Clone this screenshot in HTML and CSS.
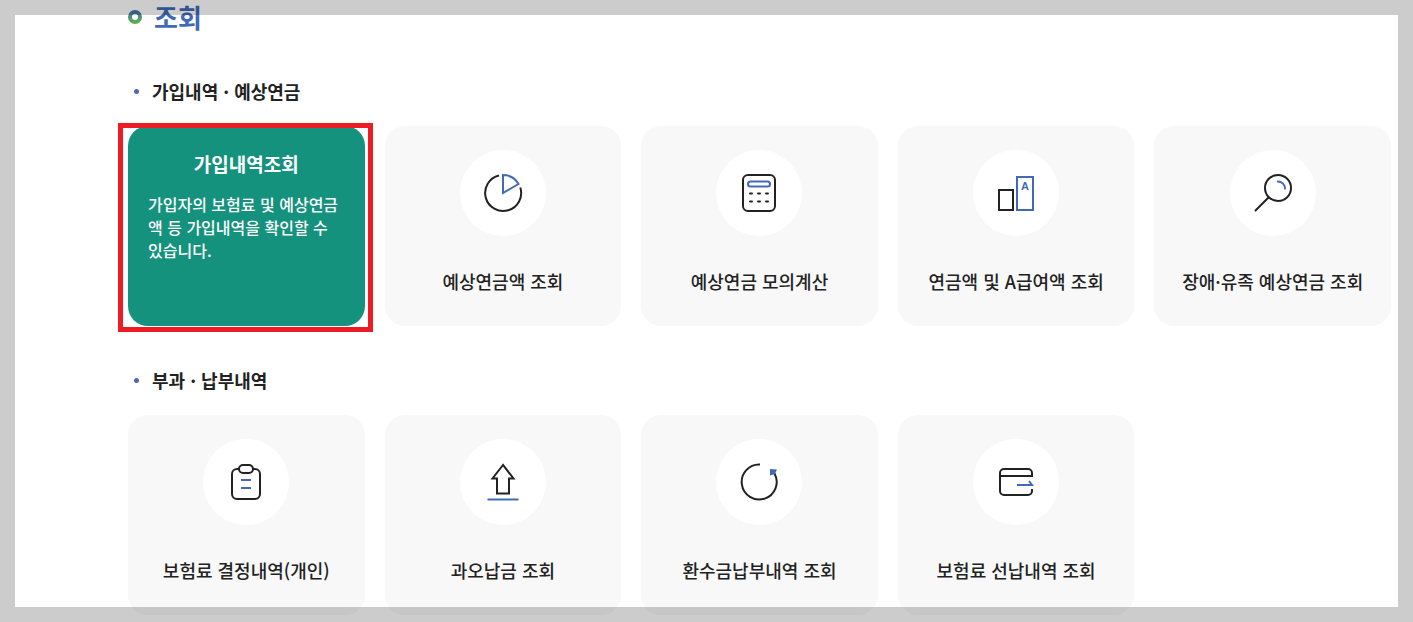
FILE: index.html
```html
<!DOCTYPE html>
<html lang="ko">
<head>
<meta charset="utf-8">
<meta name="viewport" content="width=device-width, initial-scale=1">
<title>조회</title>
<link rel="stylesheet" href="styles.css">
</head>
<body>
<main class="page">
  <h1 class="page-title">
    <svg class="ring" viewBox="0 0 14 14" aria-hidden="true">
      <defs><linearGradient id="ring-fill" x1="0" y1="0" x2="0" y2="14" gradientUnits="userSpaceOnUse"><stop offset="0" stop-color="#4269b6"/><stop offset="1" stop-color="#5bb947"/></linearGradient></defs>
      <circle cx="7" cy="7" r="5" fill="#fff" stroke="url(#ring-fill)" stroke-width="4"/>
    </svg>
    조회
  </h1>

  <section class="group">
    <h2 class="group-title">가입내역 · 예상연금</h2>
    <div class="cards">
      <a class="card card-active" href="#">
        <strong class="card-heading">가입내역조회</strong>
        <span class="card-text">가입자의 보험료 및 예상연금액 등 가입내역을 확인할 수 있습니다.</span>
      </a>
      <a class="card" href="#">
        <span class="icon"><svg viewBox="0 0 40 40" aria-hidden="true"><path d="M16 2.5A18 18 0 1 0 37.300 14.500"/><path class="blue" d="M20 2V20L35.500 11A18 18 0 0 0 20 2Z"/></svg></span>
        <span class="label">예상연금액 조회</span>
      </a>
      <a class="card" href="#">
        <span class="icon"><svg viewBox="0 0 40 40" aria-hidden="true"><rect x="4" y="2" width="32" height="36" rx="5"/><rect class="blue" x="9" y="8.500" width="22" height="5" rx="2.500"/><path stroke-linecap="round" d="M11 20.500h2M19 20.500h2M27 20.500h2M11 28.500h2M19 28.500h2M27 28.500h2"/></svg></span>
        <span class="label">예상연금 모의계산</span>
      </a>
      <a class="card" href="#">
        <span class="icon"><svg viewBox="0 0 40 40" aria-hidden="true"><rect x="3" y="17" width="14" height="20"/><rect class="blue" x="21" y="4" width="16" height="33"/><text class="icon-letter" x="29" y="17" text-anchor="middle">A</text></svg></span>
        <span class="label">연금액 및 A급여액 조회</span>
      </a>
      <a class="card" href="#">
        <span class="icon"><svg viewBox="0 0 40 40" aria-hidden="true"><circle cx="25" cy="15" r="13"/><path stroke-linecap="round" d="M15.500 24.500L2.500 37.500"/><path class="blue" d="M24 8.500C29 8 32.500 12 32 16.500"/></svg></span>
        <span class="label">장애·유족 예상연금 조회</span>
      </a>
    </div>
  </section>

  <section class="group">
    <h2 class="group-title">부과 · 납부내역</h2>
    <div class="cards">
      <a class="card" href="#">
        <span class="icon"><svg viewBox="0 0 40 40" aria-hidden="true"><path d="M13 7H11a5 5 0 0 0-5 5V32a5 5 0 0 0 5 5H29a5 5 0 0 0 5-5V12a5 5 0 0 0-5-5H27"/><rect x="13" y="3" width="14" height="8" rx="4"/><path class="blue" d="M15 18H25M15 26H25"/></svg></span>
        <span class="label">보험료 결정내역(개인)</span>
      </a>
      <a class="card" href="#">
        <span class="icon"><svg viewBox="0 0 40 40" aria-hidden="true"><path d="M20 3L9.500 16.500H14V31.500H26V16.500H30.500Z"/><path class="blue" d="M4.500 37.500H35.500"/></svg></span>
        <span class="label">과오납금 조회</span>
      </a>
      <a class="card" href="#">
        <span class="icon"><svg viewBox="0 0 40 40" aria-hidden="true"><path d="M21 2.500A17.500 17.500 0 1 0 35.500 11.500"/><path class="blue-fill" d="M31 7L38 7.500L36 12L31 13.500Z"/></svg></span>
        <span class="label">환수금납부내역 조회</span>
      </a>
      <a class="card" href="#">
        <span class="icon"><svg viewBox="0 0 40 40" aria-hidden="true"><path d="M36 15V11a4 4 0 0 0-4-4H8a4 4 0 0 0-4 4V29a4 4 0 0 0 4 4H32a4 4 0 0 0 4-4V27M4 14H36"/><path class="blue" d="M21 23H36L33 19"/></svg></span>
        <span class="label">보험료 선납내역 조회</span>
      </a>
    </div>
  </section>
</main>
<div class="frame" aria-hidden="true"></div>
</body>
</html>
```
FILE: styles.css
```css
* { box-sizing: border-box; }

body {
  margin: 0;
  background: #fff;
  color: #222;
  font-family: "Noto Sans CJK KR", "Noto Sans", sans-serif;
}

.page { padding: 0 22px 0 128px; }

.page-title {
  display: flex;
  align-items: center;
  gap: 12px;
  margin: 0 0 43px;
  color: #4269b6;
  font-size: 26px;
  line-height: 34px;
  font-weight: 700;
}

.ring { width: 14px; height: 14px; }

.group + .group { margin-top: 40px; }

.group-title {
  display: flex;
  align-items: center;
  gap: 13px;
  margin: 0 0 20px;
  padding-left: 6px;
  font-size: 18px;
  line-height: 29px;
  font-weight: 700;
}

.group-title::before {
  content: "";
  width: 5px;
  height: 5px;
  border-radius: 50%;
  background: #4b67b7;
}

.cards {
  display: grid;
  grid-template-columns: repeat(5, minmax(0, 1fr));
  gap: 20px;
}

.card {
  display: flex;
  flex-direction: column;
  align-items: center;
  min-height: 200px;
  padding: 24px 20px;
  border-radius: 20px;
  background: #f8f8f8;
  color: #222;
  text-decoration: none;
}

.card-active {
  position: relative;
  background: #15927d;
  color: #fff;
}

.card-active::after {
  content: "";
  position: absolute;
  inset: -3px -8px -6px -10px;
  border: 5px solid #ed1c24;
}

.card-heading {
  margin-bottom: 15px;
  font-size: 19px;
  line-height: 28px;
  font-weight: 700;
}

.card-text {
  align-self: stretch;
  font-size: 16px;
  line-height: 23px;
  font-weight: 500;
}

.icon {
  display: grid;
  place-items: center;
  width: 86px;
  height: 86px;
  border-radius: 50%;
  background: #fff;
}

.icon svg {
  width: 40px;
  height: 40px;
  fill: none;
  stroke: #222;
  stroke-width: 2;
}

.icon .blue { stroke: #4269b6; }
.icon .blue-fill { fill: #4269b6; stroke: none; }

.icon-letter {
  fill: #4269b6;
  stroke: none;
  font-family: "Liberation Sans", sans-serif;
  font-size: 11px;
  font-weight: 700;
}

.label {
  margin-top: 31px;
  font-size: 18px;
  line-height: 28px;
  font-weight: 500;
  white-space: nowrap;
}

.frame {
  position: fixed;
  inset: 0;
  border: 15px solid rgba(0, 0, 0, 0.2);
  pointer-events: none;
}
```
